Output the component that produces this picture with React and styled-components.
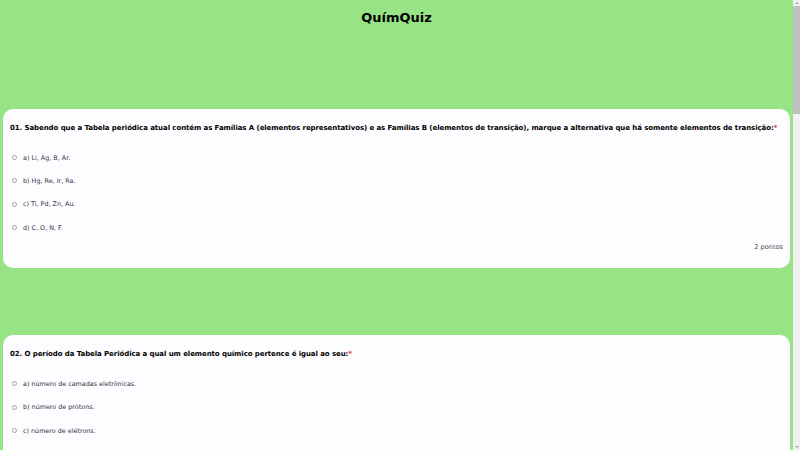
import React from 'react';
import styled, { createGlobalStyle } from 'styled-components';

const GlobalStyle = createGlobalStyle`
    html, body {
        margin:0;
        padding:0;
        background:#97e487;
        font-family:"DejaVu Sans", "Noto Sans", sans-serif;
    }
`

const Page = styled.div`
    padding-right:7px;
`

const Title = styled.h1`
    margin:0;
    font-size:13px;
    line-height:36px;
    text-align:center;
    color:#000;
    font-weight:700;
`

const Quiz = styled.div`
    display:flex;
    flex-direction:column;
    gap:67px;
    padding:73px 3px 40px;
`

const Card = styled.div`
    background:#fdfcff;
    border-radius:10px;
    padding:12px 7px 13px;
`

const Question = styled.p`
    margin:0 0 11px;
    font-size:7px;
    letter-spacing:-0.08px;
    line-height:14px;
    font-weight:700;
    color:#000;
    white-space:nowrap;
`

const Required = styled.span`
    color:#d93025;
`

const Option = styled.label`
    display:flex;
    align-items:center;
    height:23.33px;
    font-size:6.4px;
    color:#35333f;
`

const Radio = styled.span`
    width:5px;
    height:5px;
    border:1px solid #a3a3a3;
    border-radius:50%;
    margin:0 6px 0 2px;
    box-sizing:border-box;
    flex:none;
`

const Points = styled.div`
    text-align:right;
    font-size:6.6px;
    line-height:16px;
    color:#4a4a4a;
`

const Scrollbar = styled.div`
    position:fixed;
    top:0;
    right:0;
    bottom:0;
    width:7px;
    background:#f1f1f1;
    display:flex;
    flex-direction:column;
    align-items:center;
`

const Arrow = styled.span`
    width:0;
    height:0;
    border-left:2px solid transparent;
    border-right:2px solid transparent;
    ${p=>p.$down?'border-top:2px solid #a3a3a3;':'border-bottom:2px solid #a3a3a3;'}
    margin:${p=>p.$down?'auto 0 2px':'2px 0 0'};
`

const Thumb = styled.span`
    position:absolute;
    top:6px;
    left:0;
    width:7px;
    height:108px;
    background:#c1c1c1;
`

const questions = [
    {
        id:1,
        text:'01. Sabendo que a Tabela periódica atual contém as Famílias A (elementos representativos) e as Famílias B (elementos de transição), marque a alternativa que há somente elementos de transição:',
        options:['a) Li, Ag, B, Ar.','b) Hg, Re, Ir, Ra.','c) Ti, Pd, Zn, Au.','d) C, O, N, F.']
    },
    {
        id:2,
        text:'02. O período da Tabela Periódica a qual um elemento químico pertence é igual ao seu:',
        options:['a) número de camadas eletrônicas.','b) número de prótons.','c) número de elétrons.','d) número de nêutrons.']
    }
]

function App() {
    return (
        <Page>
            <GlobalStyle/>
            <Title>QuímQuiz</Title>
            <Quiz>
                {questions.map(q=>(
                    <Card key={q.id}>
                        <Question>{q.text}<Required>*</Required></Question>
                        {q.options.map(o=>(
                            <Option key={o}><Radio/>{o}</Option>
                        ))}
                        <Points>2 pontos</Points>
                    </Card>
                ))}
            </Quiz>
            <Scrollbar>
                <Arrow/>
                <Thumb/>
                <Arrow $down/>
            </Scrollbar>
        </Page>
    )
}

export default App
